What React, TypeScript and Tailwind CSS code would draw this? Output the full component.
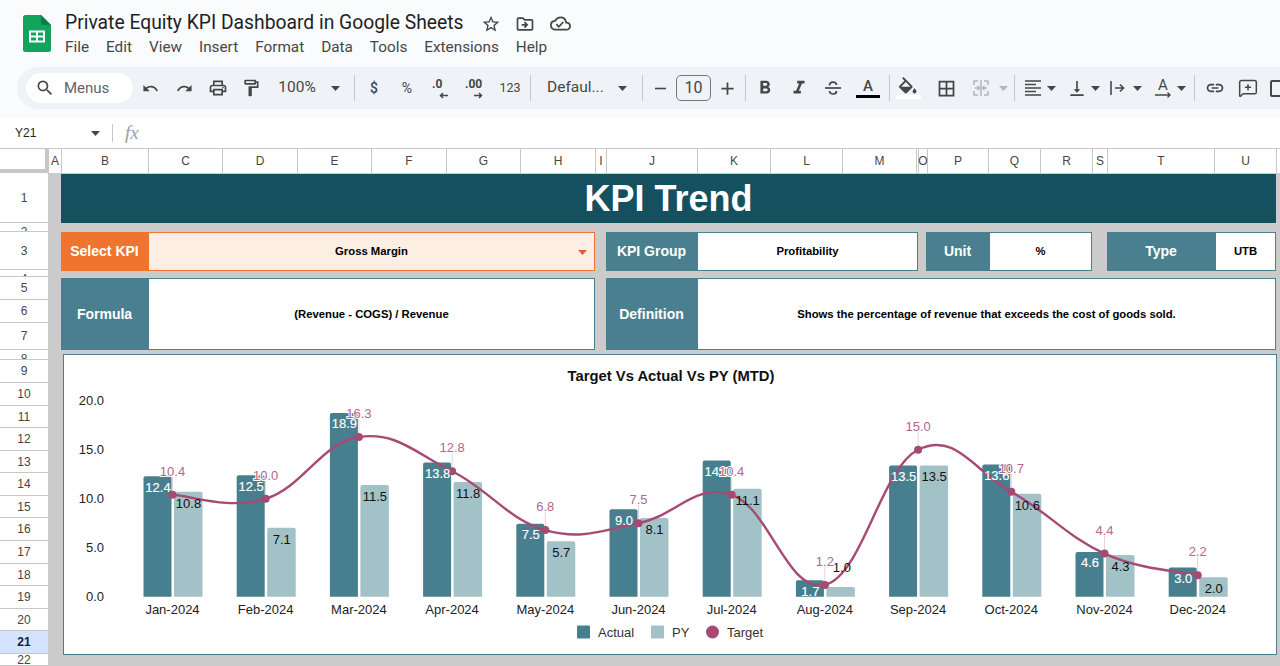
import { MessageSquarePlus } from "lucide-react";
import {
  MdAdd,
  MdOutlineBorderAll,
  MdOutlineCloudDone,
  MdOutlineDriveFileMove,
  MdOutlineFormatBold,
  MdOutlineFormatItalic,
  MdOutlineFormatPaint,
  MdOutlineLink,
  MdOutlinePrint,
  MdOutlineRedo,
  MdOutlineSearch,
  MdOutlineStarBorder,
  MdOutlineUndo,
  MdOutlineVerticalAlignBottom,
  MdRemove,
} from "react-icons/md";
import type { ReactNode } from "react";

const columns = [
  { name: "A", width: "w-[13px]" },
  { name: "B", width: "w-[87px]" },
  { name: "C", width: "w-[74px]" },
  { name: "D", width: "w-[75px]" },
  { name: "E", width: "w-[74px]" },
  { name: "F", width: "w-[75px]" },
  { name: "G", width: "w-[74px]" },
  { name: "H", width: "w-[75px]" },
  { name: "I", width: "w-[11px]" },
  { name: "J", width: "w-[91px]" },
  { name: "K", width: "w-[73px]" },
  { name: "L", width: "w-[72px]" },
  { name: "M", width: "w-[74px]" },
  { name: "", width: "w-[2px]" },
  { name: "O", width: "w-[9px]" },
  { name: "P", width: "w-[61px]" },
  { name: "Q", width: "w-[52px]" },
  { name: "R", width: "w-[52px]" },
  { name: "S", width: "w-[15px]" },
  { name: "T", width: "w-[107px]" },
  { name: "U", width: "w-[62px]" },
];

const rows = [
  { name: "1", height: "h-[50px]" },
  { name: "2", height: "h-[9px]", thin: true },
  { name: "3", height: "h-[38px]" },
  { name: "4", height: "h-[7px]", thin: true },
  { name: "5", height: "h-[23px]" },
  { name: "6", height: "h-[23px]" },
  { name: "7", height: "h-[27px]" },
  { name: "8", height: "h-[10px]", thin: true },
  { name: "9", height: "h-[23px]" },
  { name: "10", height: "h-[23px]" },
  { name: "11", height: "h-[22px]" },
  { name: "12", height: "h-[23px]" },
  { name: "13", height: "h-[22px]" },
  { name: "14", height: "h-[23px]" },
  { name: "15", height: "h-[22px]" },
  { name: "16", height: "h-[23px]" },
  { name: "17", height: "h-[23px]" },
  { name: "18", height: "h-[22px]" },
  { name: "19", height: "h-[23px]" },
  { name: "20", height: "h-[22px]" },
  { name: "21", height: "h-[23px]" },
  { name: "22", height: "h-[12px]" },
];

const months = [
  { label: "Jan-2024", actual: 12.4, py: 10.8, target: 10.4 },
  { label: "Feb-2024", actual: 12.5, py: 7.1, target: 10.0 },
  { label: "Mar-2024", actual: 18.9, py: 11.5, target: 16.3 },
  { label: "Apr-2024", actual: 13.8, py: 11.8, target: 12.8 },
  { label: "May-2024", actual: 7.5, py: 5.7, target: 6.8 },
  { label: "Jun-2024", actual: 9.0, py: 8.1, target: 7.5 },
  { label: "Jul-2024", actual: 14.0, py: 11.1, target: 10.4 },
  { label: "Aug-2024", actual: 1.7, py: 1.0, target: 1.2 },
  { label: "Sep-2024", actual: 13.5, py: 13.5, target: 15.0 },
  { label: "Oct-2024", actual: 13.6, py: 10.6, target: 10.7 },
  { label: "Nov-2024", actual: 4.6, py: 4.3, target: 4.4 },
  { label: "Dec-2024", actual: 3.0, py: 2.0, target: 2.2 },
];

const BASE_Y = 596.7;
const BAR_UNIT = 9.72;
const LINE_UNIT = 9.8;
const barY = (v: number) => BASE_Y - v * BAR_UNIT;
const lineY = (v: number) => BASE_Y - v * LINE_UNIT;
const toX = (i: number) => 172.5 + i * 93.2;

const targetPath = () => {
  const pts = months.map((m, i) => [toX(i), lineY(m.target)]);
  let d = `M${pts[0][0]} ${pts[0][1]}`;
  for (let i = 0; i < pts.length - 1; i++) {
    const p0 = pts[i - 1] ?? pts[i];
    const p1 = pts[i];
    const p2 = pts[i + 1];
    const p3 = pts[i + 2] ?? p2;
    const k = 1 / 5;
    d += ` C${p1[0] + (p2[0] - p0[0]) * k} ${p1[1] + (p2[1] - p0[1]) * k} ${p2[0] - (p3[0] - p1[0]) * k} ${p2[1] - (p3[1] - p1[1]) * k} ${p2[0]} ${p2[1]}`;
  }
  return d;
};

const Caret = ({ light }: { light?: boolean }) => (
  <svg width="9" height="5" viewBox="0 0 9 5" className={light ? "shrink-0 text-[#b4b6b8]" : "shrink-0 text-[#444746]"}>
    <path d="M0 0h9L4.5 5z" fill="currentColor" />
  </svg>
);

const Sep = () => <div className="h-[26px] w-px shrink-0 bg-[#c7c7c7]" />;

const Slot = ({ className, children }: { className: string; children: ReactNode }) => (
  <div className={`flex shrink-0 items-center justify-center ${className}`}>{children}</div>
);

const SheetsLogo = () => (
  <svg width="28" height="37" viewBox="0 0 28 37">
    <path d="M2.5 0H18l10 10v24.5a2.5 2.5 0 0 1-2.5 2.5h-23A2.500 2.500 0 0 1 0 34.500v-32A2.500 2.500 0 0 1 2.500 0z" fill="#12a35c" />
    <path d="M18 0l10 10h-7.500A2.500 2.500 0 0 1 18 7.500z" fill="#0c7f45" />
    <path d="M6 15.500h16v12H6z M8 17.500v3h5v-3z M15 17.500v3h5v-3z M8 22.500v3h5v-3z M15 22.500v3h5v-3z" fill="#fff" fillRule="evenodd" />
  </svg>
);

const Toolbar = () => (
  <div className="ml-[17px] flex h-[42px] items-center rounded-l-[21px] bg-[#eff3f8] font-['Roboto',sans-serif] text-[#444746]">
    <div className="ml-[9px] flex h-[30px] w-[107px] shrink-0 items-center rounded-full bg-white pl-[9px]">
      <MdOutlineSearch size={20} />
      <span className="ml-[9px] text-[15px] text-[#5f6368]">Menus</span>
    </div>
    <Slot className="w-[34px]"><MdOutlineUndo size={17} /></Slot>
    <Slot className="w-[34px]"><MdOutlineRedo size={17} /></Slot>
    <Slot className="w-[33px]"><MdOutlinePrint size={20} /></Slot>
    <Slot className="w-[34px]"><MdOutlineFormatPaint size={20} /></Slot>
    <Slot className="w-[58px] text-[15.500px]">100%</Slot>
    <Slot className="w-[18px]"><Caret /></Slot>
    <Slot className="w-[20px]"><Sep /></Slot>
    <Slot className="w-[20px] text-[14px] font-medium">$</Slot>
    <Slot className="w-[46px] text-[14px]">%</Slot>
    <Slot className="w-[20px]">
      <div className="relative h-[22px] w-[16px] text-[12px] font-bold leading-[14px]">
        .0
        <svg className="absolute bottom-0 right-0" width="9" height="7" viewBox="0 0 9 7"><path d="M9 3.500H2M4 1 1.500 3.500 4 6" fill="none" stroke="currentColor" strokeWidth="1.500" /></svg>
      </div>
    </Slot>
    <Slot className="w-[48px]">
      <div className="relative h-[22px] w-[18px] text-[12px] font-bold leading-[14px]">
        .00
        <svg className="absolute bottom-0 right-0" width="9" height="7" viewBox="0 0 9 7"><path d="M0 3.500h7M5 1l2.500 2.500L5 6" fill="none" stroke="currentColor" strokeWidth="1.500" /></svg>
      </div>
    </Slot>
    <Slot className="w-[24px] text-[12.500px]">123</Slot>
    <Slot className="w-[16px]"><Sep /></Slot>
    <Slot className="ml-[9px] w-[60px] justify-start text-[15.500px]">Defaul...</Slot>
    <Slot className="w-[30px]"><Caret /></Slot>
    <Slot className="w-[10px]"><Sep /></Slot>
    <Slot className="w-[26px]"><MdRemove size={19} /></Slot>
    <Slot className="ml-[3px] h-[26px] w-[35px] rounded-[5px] border border-[#747775] text-[16px]">10</Slot>
    <Slot className="w-[32px]"><MdAdd size={21} /></Slot>
    <Slot className="w-[4px]"><Sep /></Slot>
    <Slot className="w-[36px]"><MdOutlineFormatBold size={22} /></Slot>
    <Slot className="w-[32px]"><MdOutlineFormatItalic size={22} /></Slot>
    <Slot className="w-[36px]">
      <svg width="18" height="18" viewBox="0 0 18 18" fill="none" stroke="currentColor" strokeWidth="1.700"><path d="M1 9h16" /><path d="M5.500 6.500C5.500 2 12.500 2 12.500 6" /><path d="M5.500 12C6 16 12.500 16 12.500 12" /></svg>
    </Slot>
    <Slot className="w-[34px]">
      <div className="flex flex-col items-center">
        <span className="text-[15px] font-medium leading-[16px]">A</span>
        <div className="mt-[1px] h-[3px] w-[24px] bg-black" />
      </div>
    </Slot>
    <Slot className="w-[8px]"><Sep /></Slot>
    <Slot className="w-[30px]">
      <div className="flex flex-col items-center">
        <svg width="20" height="17" viewBox="3 0 18.500 17.500" fill="currentColor"><path d="M16.560 8.940 7.620 0 6.210 1.410l2.380 2.380-5.150 5.150c-.59.59-.59 1.540 0 2.120l5.500 5.500c.29.29.68.440 1.060.440s.77-.15 1.060-.44l5.500-5.500c.59-.58.59-1.530 0-2.120zM5.210 10 10 5.210 14.790 10H5.210zM19 11.500s-2 2.170-2 3.500c0 1.100.9 2 2 2s2-.9 2-2c0-1.330-2-3.500-2-3.500z" /></svg>
        <div className="mt-[1px] h-[4px] w-[25px] bg-white" />
      </div>
    </Slot>
    <Slot className="w-[46px]"><MdOutlineBorderAll size={21} /></Slot>
    <Slot className="w-[24px]">
      <svg width="18" height="18" viewBox="0 0 18 18" fill="none" stroke="#b4b6b8" strokeWidth="1.500"><path d="M6 2H2v4M12 2h4v4M6 16H2v-4M12 16h4v-4M9 1v16" /><path d="M3 9h4M5.500 7 7.500 9l-2 2M15 9h-4M12.500 7l-2 2 2 2" /></svg>
    </Slot>
    <Slot className="w-[20px]"><Caret light /></Slot>
    <Slot className="w-[2px]"><Sep /></Slot>
    <Slot className="ml-[9px] w-[19px]">
      <svg width="17" height="18" viewBox="0 0 17 18" stroke="currentColor" strokeWidth="1.400"><path d="M0 2h16M0 5.500h11M0 9h16M0 12.500h11M0 16h16" /></svg>
    </Slot>
    <Slot className="ml-[4px] w-[9px]"><Caret /></Slot>
    <Slot className="ml-[11px] w-[20px]"><MdOutlineVerticalAlignBottom size={21} /></Slot>
    <Slot className="ml-[4px] w-[9px]"><Caret /></Slot>
    <Slot className="ml-[8px] w-[20px]">
      <svg width="16" height="18" viewBox="0 0 16 18" fill="none" stroke="currentColor" strokeWidth="1.600"><path d="M1 2v14M5 9h9M10 5.500 13.500 9 10 12.500" /></svg>
    </Slot>
    <Slot className="ml-[5px] w-[9px]"><Caret /></Slot>
    <Slot className="ml-[11px] w-[20px]">
      <div className="flex flex-col items-center">
        <span className="text-[15px] leading-[14px]">A</span>
        <svg width="18" height="6" viewBox="0 0 18 6" fill="none" stroke="currentColor" strokeWidth="1.300"><path d="M1 3h15M13.500 .5 16 3l-2.500 2.500" /></svg>
      </div>
    </Slot>
    <Slot className="ml-[4px] w-[9px]"><Caret /></Slot>
    <Slot className="ml-[8px] w-px"><Sep /></Slot>
    <Slot className="ml-[10px] w-[20px]"><MdOutlineLink size={22} /></Slot>
    <Slot className="ml-[13px] w-[20px]"><MessageSquarePlus size={20} strokeWidth={1.800} /></Slot>
    <Slot className="ml-[12px] w-[14px]">
      <div className="h-[17px] w-[14px] shrink-0 rounded-[2px] border-2 border-[#444746]" />
    </Slot>
  </div>
);

const Label = ({ className, children }: { className: string; children: ReactNode }) => (
  <div className={`flex shrink-0 items-center justify-center text-[14px] font-bold text-white ${className}`}>{children}</div>
);

const Value = ({ className, children }: { className: string; children: ReactNode }) => (
  <div className={`flex items-center justify-center border border-[#4a7f8f] bg-white text-[11.300px] font-bold text-black ${className}`}>{children}</div>
);

const Chart = () => (
  <svg viewBox="64 355 1212 299" className="block h-[299px] w-[1212px]" fontFamily="'Liberation Sans', Arial, sans-serif" fontSize="13">
    <text x="671" y="381" textAnchor="middle" fontSize="14.800" fontWeight="700" fill="#111">Target Vs Actual Vs PY (MTD)</text>
    {["20.0", "15.0", "10.0", "5.0", "0.0"].map((t, i) => (
      <text key={t} x="104" y={405 + i * 49} textAnchor="end" fill="#222">{t}</text>
    ))}
    {months.map((m, i) => (
      <g key={m.label}>
        <path d={`M${toX(i) - 29} ${BASE_Y}V${barY(m.actual) + 2}q0-2 2-2h24q2 0 2 2V${BASE_Y}z`} fill="#477f8e" />
        <path d={`M${toX(i) + 1.5} ${BASE_Y}V${barY(m.py) + 2}q0-2 2-2h24.500q2 0 2 2V${BASE_Y}z`} fill="#a2c2c8" />
        <line x1={toX(i)} x2={toX(i)} y1={lineY(m.target) - 19} y2={lineY(m.target)} stroke="#e3d3dc" strokeWidth="1" />
        <text x={toX(i)} y="614" textAnchor="middle" fill="#222">{m.label}</text>
      </g>
    ))}
    <path d={targetPath()} fill="none" stroke="#a64a74" strokeWidth="2.400" />
    {months.map((m, i) => (
      <g key={m.label}>
        <circle cx={toX(i)} cy={lineY(m.target)} r="4" fill="#a64a74" />
        <text x={toX(i) - 14.5} y={barY(m.actual) + 15.500} textAnchor="middle" fill="#fff" stroke="#fff" strokeWidth="0.150">{m.actual.toFixed(1)}</text>
        {/* Aug PY bar is too short, its label sits above it */}
        <text x={toX(i) + (m.py < 1.5 ? 17 : 16)} y={m.py < 1.5 ? 571.500 : barY(m.py) + 16} textAnchor="middle" fill="#111">{m.py.toFixed(1)}</text>
        <text x={toX(i)} y={lineY(m.target) - 19} textAnchor="middle" fill="#b5648f" stroke="#fff" strokeWidth="2" paintOrder="stroke">{m.target.toFixed(1)}</text>
      </g>
    ))}
    <rect x="577" y="625.500" width="13" height="13" rx="1" fill="#477f8e" />
    <text x="598" y="637" fill="#333">Actual</text>
    <rect x="651" y="625.500" width="13" height="13" rx="1" fill="#a2c2c8" />
    <text x="672" y="637" fill="#333">PY</text>
    <circle cx="712.500" cy="632" r="6.500" fill="#a64a74" />
    <text x="727" y="637" fill="#333">Target</text>
  </svg>
);

export default function App() {
  return (
    <div className="flex h-[666px] w-[1280px] flex-col overflow-hidden bg-white font-['Liberation_Sans',Arial,sans-serif]">
      {/* Docs header */}
      <div className="bg-[#f9fbfd] pb-[9px]">
        <div className="flex h-[67px]">
          <div className="ml-[23px] mt-[15px]"><SheetsLogo /></div>
          <div className="ml-[14px] mt-[11px] font-['Roboto',sans-serif] text-[#1f1f1f]">
            <div className="flex h-[25px] items-center">
              <span className="text-[19.300px]">Private Equity KPI Dashboard in Google Sheets</span>
              <MdOutlineStarBorder size={20} className="ml-[17px] text-[#444746]" />
              <MdOutlineDriveFileMove size={20} className="ml-[14px] text-[#444746]" />
              <MdOutlineCloudDone size={21} className="ml-[15px] text-[#444746]" />
            </div>
            <div className="flex gap-[17px] text-[15.300px] text-[#444746]">
              {["File", "Edit", "View", "Insert", "Format", "Data", "Tools", "Extensions", "Help"].map((m) => (
                <span key={m}>{m}</span>
              ))}
            </div>
          </div>
        </div>
        <Toolbar />
      </div>

      {/* Formula bar */}
      <div className="flex h-[30px] shrink-0 items-center text-[#444746]">
        <span className="ml-[15px] w-[76px] text-[12px] text-[#1f1f1f]">Y21</span>
        <Caret />
        <div className="ml-[12px] h-[18px] w-px bg-[#c7c7c7]" />
        <span className="ml-[12px] font-['Liberation_Serif',serif] text-[19px] italic text-[#9aa0a6]">fx</span>
      </div>

      {/* Column headers */}
      <div className="flex h-[25px] shrink-0 border-t border-[#c7c7c7] bg-white">
        <div className="h-full w-[49px] shrink-0 border-b-[4px] border-r-[4px] border-[#c7c7c7]" />
        {columns.map((c, i) => (
          <div key={i} className={`flex h-full shrink-0 items-center justify-center border-r border-[#c7c7c7] text-[12px] text-[#444746] ${c.width}`}>
            {c.name}
          </div>
        ))}
      </div>

      <div className="flex min-h-0 flex-1">
        {/* Row headers */}
        <div className="w-[48px] shrink-0 bg-white">
          {rows.map((r) => (
            <div
              key={r.name}
              className={`flex justify-center overflow-hidden border-b border-[#c7c7c7] text-[12px] ${r.height} ${r.thin ? "items-start pt-[3px] leading-[12px]" : "items-center"} ${r.name === "21" ? "bg-[#d3e3fd] font-bold text-[#0b1f4a]" : "text-[#444746]"}`}
            >
              {r.name}
            </div>
          ))}
        </div>

        {/* Sheet */}
        <div className="min-w-0 flex-1 bg-[#cbcbcb] pl-[13px] pt-px">
          <div className="flex h-[49px] w-[1215px] items-center justify-center bg-[#15505f] text-[36px] font-bold text-white">
            KPI Trend
          </div>

          <div className="mt-[9px] flex h-[39px] w-[1215px]">
            <Label className="w-[87px] bg-[#ee7430]">Select KPI</Label>
            <div className="relative flex w-[447px] items-center justify-center border border-[#ee7430] bg-[#fdeee4] text-[11.300px] font-bold text-black">
              Gross Margin
              <svg className="absolute right-[7px] top-[17px]" width="9" height="5" viewBox="0 0 9 5"><path d="M0 0h9L4.500 5z" fill="#d9622a" /></svg>
            </div>
            <Label className="ml-[11px] w-[91px] bg-[#4a7f8f]">KPI Group</Label>
            <Value className="w-[221px]">Profitability</Value>
            <Label className="ml-[8px] w-[63px] bg-[#4a7f8f]">Unit</Label>
            <Value className="w-[103px]">%</Value>
            <Label className="ml-[15px] w-[108px] bg-[#4a7f8f]">Type</Label>
            <Value className="w-[61px]">UTB</Value>
          </div>

          <div className="mt-[7px] flex h-[72px] w-[1215px]">
            <Label className="w-[87px] bg-[#4a7f8f]">Formula</Label>
            <Value className="w-[447px]">(Revenue - COGS) / Revenue</Value>
            <Label className="ml-[11px] w-[91px] bg-[#4a7f8f]">Definition</Label>
            <Value className="w-[579px]">Shows the percentage of revenue that exceeds the cost of goods sold.</Value>
          </div>

          <div className="ml-[2px] mt-[4px] h-[301px] w-[1214px] border border-[#4a7f8f] bg-white">
            <Chart />
          </div>
        </div>
      </div>
    </div>
  );
}
